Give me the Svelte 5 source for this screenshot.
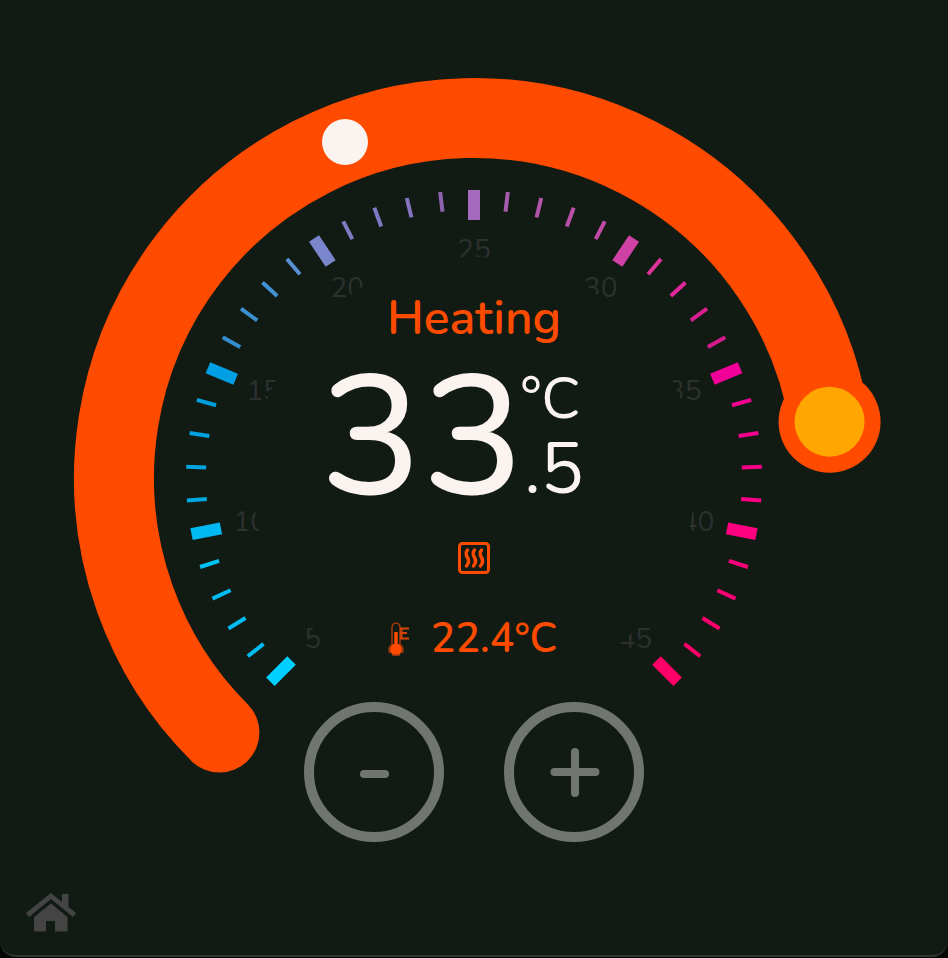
<script>
  const CX = 474;
  const CY = 478;
  const TRACK = 360;
  const STEP = 6.75;

  let target = $state(33.5);
  const handleAngle = $derived(81 + (target - 33.5) * STEP);
  const roomAngle = -21;

  const majorColors = ['#00cfff', '#00b9f2', '#009fe3', '#7986cb', '#a56abd', '#d041a6', '#f00098', '#ff0080', '#ff0066'];
  const minorColors = [
    ['#00bcf2', '#00bcf2', '#00bcf2', '#00c4f8'],
    ['#00a8e0', '#00a5e0', '#00a2e0', '#009fdc'],
    ['#348fce', '#3b90d0', '#4392d4', '#5a90d2'],
    ['#7f7bc2', '#8078c2', '#8673c0', '#8f62b0'],
    ['#a75bac', '#b155aa', '#b850a8', '#c04aa6'],
    ['#dc3399', '#e02799', '#d81f90', '#d51a8c'],
    ['#f20090', '#f5008c', '#f80088', '#fa0084'],
    ['#fa0078', '#fa0072', '#fc006c', '#ff0068']
  ];

  function point(angle, radius) {
    const a = (angle * Math.PI) / 180;
    return { x: CX + radius * Math.sin(a), y: CY - radius * Math.cos(a) };
  }

  const ticks = Array.from({ length: 41 }, (_, i) => {
    const major = i % 5 === 0;
    const group = Math.floor(i / 5);
    return {
      angle: -135 + i * STEP,
      major,
      value: 5 + i,
      color: major ? majorColors[group] : minorColors[group][(i % 5) - 1]
    };
  });

  const labels = ticks.filter((t) => t.major).map((t) => ({ ...point(t.angle, 228), value: t.value }));

  const start = point(-135, TRACK);
  const end = $derived(point(handleAngle, TRACK));
  const room = point(roomAngle, TRACK);
  const arc = $derived(
    `M${start.x} ${start.y}A${TRACK} ${TRACK} 0 ${handleAngle > 45 ? 1 : 0} 1 ${end.x} ${end.y}`
  );

  const whole = $derived(Math.floor(target));
  const fraction = $derived(Math.round((target - whole) * 10));

  function change(delta) {
    target = Math.min(41, Math.max(5, target + delta));
  }
</script>

<main class="card">
  <section class="dial">
    <svg class="gauge" viewBox="0 0 948 860" aria-hidden="true">
      <path d={arc} class="track" />
      {#each ticks as t}
        <line
          x1={CX}
          x2={CX}
          y1={CY - 288}
          y2={CY - (t.major ? 258 : 268)}
          stroke={t.color}
          stroke-width={t.major ? 12 : 4}
          transform="rotate({t.angle} {CX} {CY})"
        />
      {/each}
      {#each labels as l}
        <text x={l.x} y={l.y + 9} class="tick-label">{l.value}</text>
      {/each}
      <circle cx={CX} cy={CY} r="221" class="face" />
      <circle cx={room.x} cy={room.y} r="23" class="room" />
      <circle cx={end.x} cy={end.y} r="51" class="halo" />
      <circle cx={end.x} cy={end.y} r="35" class="handle" />
    </svg>

    <div class="readout">
      <input class="hidden" type="range" min="5" max="41" step="0.5" aria-label="Target temperature" bind:value={target} />
      <h1>Heating</h1>
      <div class="value">
        <span class="whole">{whole}</span>
        <span class="side">
          <span class="unit">°C</span>
          <span class="fraction">.{fraction}</span>
        </span>
      </div>
      <svg class="mode" viewBox="0 0 34 34" aria-hidden="true">
        <rect x="2.5" y="2.5" width="29" height="29" rx="3" stroke-width="3" />
        <path
          d="M10.500 9C8 12 9 14 10.500 16.500S12 22 9.500 25M17.500 9C15 12 16 14 17.500 16.500S19 22 16.500 25M24.500 9C22 12 23 14 24.500 16.500S26 22 23.500 25"
          stroke-width="3.500"
          stroke-linecap="round"
        />
      </svg>
      <div class="room-temp">
        <svg class="thermo" viewBox="0 0 24 36" aria-hidden="true">
          <path d="M5 24V6.500a4 4.500 0 0 1 8 0V24" fill="none" stroke="#a83a0c" stroke-width="1.500" />
          <path d="M9 11v17" stroke="#ff4b00" stroke-width="3.500" />
          <circle cx="9" cy="28.500" r="6" fill="#ff4b00" />
          <path d="M4 24a7 7 0 0 0-1 8M14 24a7 7 0 0 1 1 8M5 34h8" fill="none" stroke="#a83a0c" stroke-width="1.500" />
          <path d="M13 7.500h9M13 12h7M13 17.500h9M14.500 7v11" fill="none" stroke="#d84408" stroke-width="2" />
        </svg>
        <span>22.4°C</span>
      </div>
      <div class="controls">
        <button type="button" aria-label="Lower temperature" onclick={() => change(-0.5)}>
          <svg viewBox="0 0 120 120"><path d="M50 62h21" /></svg>
        </button>
        <button type="button" aria-label="Raise temperature" onclick={() => change(0.5)}>
          <svg viewBox="0 0 120 120"><path d="M40.500 60h41M61 40v41" /></svg>
        </button>
      </div>
    </div>
  </section>

  <nav>
    <a href="#home" aria-label="Home">
      <svg viewBox="0 0 50 40">
        <path d="M0 20 25 0 36 9V1h6.500v13L50 20l-3 4L25 6 3 24Z" />
        <path d="M8 24 25 10.500 41.500 24v14.500H29V28h-9v10.500H8Z" stroke-linejoin="round" />
      </svg>
    </a>
  </nav>
</main>

<style>
  :global(body) {
    margin: 0;
    background: #050705;
  }

  .card {
    box-sizing: border-box;
    min-height: calc(100vh - 1px);
    border-bottom: 2px solid #303532;
    border-radius: 0 0 16px 16px;
    background: #111b14;
    font-family: Nunito, Lato, 'Open Sans', sans-serif;
    color: #ff4b00;
  }

  .dial {
    display: grid;
    max-width: 948px;
    margin: 0 auto;
  }

  .gauge,
  .readout {
    grid-area: 1 / 1;
  }

  .gauge {
    display: block;
    width: 100%;
  }

  .track {
    fill: none;
    stroke: #ff4b00;
    stroke-width: 80px;
    stroke-linecap: round;
  }

  .tick-label {
    font-size: 28px;
    font-weight: 400;
    text-anchor: middle;
    fill: #2d302f;
  }

  .face {
    fill: #111b14;
  }

  .room {
    fill: #faf3f0;
  }

  .halo {
    fill: #ff4b00;
  }

  .handle {
    fill: #ffa600;
  }

  .readout {
    display: flex;
    flex-direction: column;
    align-items: center;
    padding-top: 290px;
  }

  .hidden {
    position: absolute;
    width: 1px;
    height: 1px;
    margin: 0;
    opacity: 0;
  }

  h1 {
    margin: 0;
    font-size: 48px;
    line-height: 56px;
    font-weight: 600;
  }

  .value {
    display: flex;
    margin-top: 18px;
    padding-right: 44px;
    color: #faf3f0;
  }

  .whole {
    font-size: 170px;
    line-height: 148px;
    font-weight: 500;
  }

  .side {
    display: flex;
    flex-direction: column;
    margin-left: -4px;
  }

  .unit {
    font-size: 58px;
    line-height: 70px;
  }

  .fraction {
    padding-left: 4px;
    font-size: 72px;
    line-height: 70px;
  }

  .mode {
    width: 34px;
    height: 34px;
    margin-top: 29px;
    fill: none;
    stroke: #ff4b00;
  }

  .room-temp {
    display: flex;
    align-items: center;
    gap: 20px;
    margin-top: 40px;
    padding-right: 4px;
    font-size: 41px;
    line-height: 48px;
    font-weight: 600;
  }

  .thermo {
    width: 24px;
    height: 36px;
  }

  .controls {
    display: flex;
    gap: 60px;
    margin-top: 39px;
  }

  button {
    box-sizing: border-box;
    width: 140px;
    height: 140px;
    padding: 0;
    border: 10px solid #707572;
    border-radius: 50%;
    background: none;
    cursor: pointer;
  }

  button svg {
    display: block;
    width: 120px;
    height: 120px;
    fill: none;
    stroke: #707572;
    stroke-width: 8px;
    stroke-linecap: round;
  }

  nav {
    display: flex;
    padding: 33px 26px 22px;
  }

  nav a {
    display: block;
    width: 50px;
    height: 40px;
  }

  nav svg {
    display: block;
    fill: #444445;
  }
</style>
